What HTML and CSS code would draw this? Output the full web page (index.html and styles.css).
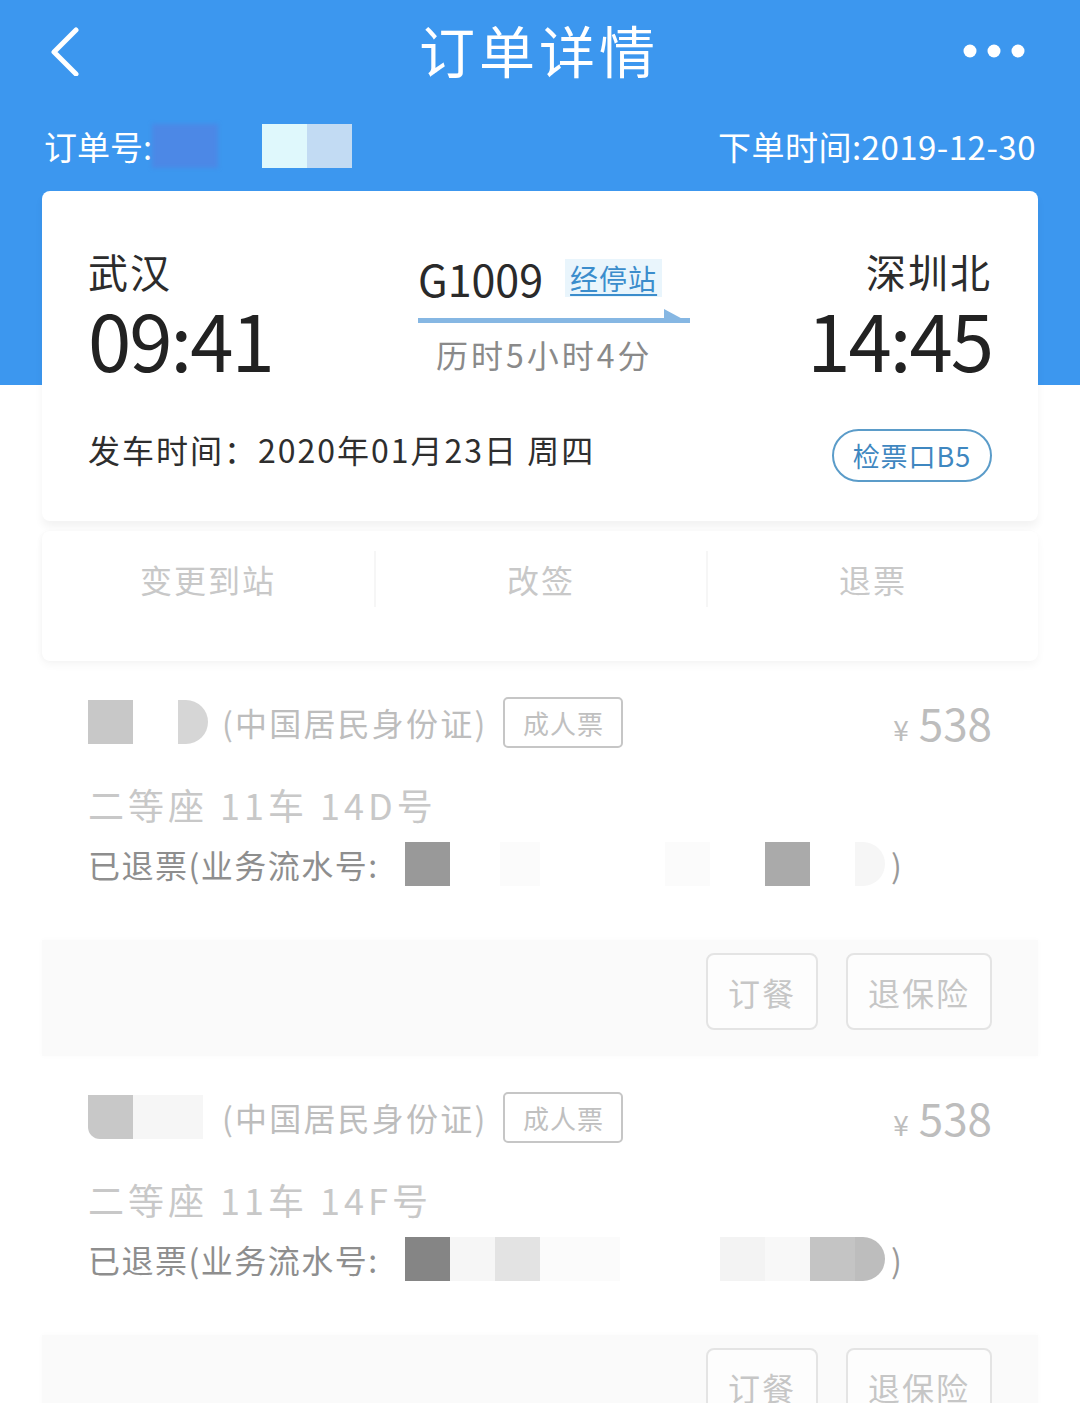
FILE: index.html
```html
<!DOCTYPE html>
<html lang="zh-CN">
<head>
<meta charset="utf-8">
<title>订单详情</title>
<link rel="stylesheet" href="styles.css">
</head>
<body>
<div class="page">
  <header class="topbar">
    <svg class="back" width="40" height="50" viewBox="0 0 40 50"><polyline points="30,4 8,26 30,48" fill="none" stroke="#fff" stroke-width="5" stroke-linecap="round" stroke-linejoin="round"/></svg>
    <h1 class="title">订单详情</h1>
    <svg class="more" width="64" height="16" viewBox="0 0 64 16"><circle cx="8" cy="8" r="6.5" fill="#fff"/><circle cx="32" cy="8" r="6.5" fill="#fff"/><circle cx="56" cy="8" r="6.5" fill="#fff"/></svg>
  </header>
  <div class="orderrow">
    <div class="orderno">订单号:<span class="mask m-blue"></span><span class="mask m-cyan"></span><span class="mask m-lblue"></span></div>
    <div class="ordertime">下单时间:2019-12-30</div>
  </div>

  <section class="card trip">
    <div class="route">
      <div class="end">
        <div class="station">武汉</div>
        <div class="time">09:41</div>
      </div>
      <div class="mid">
        <div class="trainline"><span class="trainno">G1009</span><span class="stops">经停站</span></div>
        <svg class="arrow" width="272" height="16" viewBox="0 0 272 16"><rect x="0" y="9" width="272" height="5" fill="#86b7e3"/><polygon points="246,0 272,14 246,14" fill="#86b7e3"/></svg>
        <div class="duration">历时5小时4分</div>
      </div>
      <div class="end right">
        <div class="station">深圳北</div>
        <div class="time">14:45</div>
      </div>
    </div>
    <div class="daterow">
      <div class="date">发车时间：2020年01月23日 周四</div>
      <div class="gate">检票口B5</div>
    </div>
  </section>

  <section class="card actions">
    <div class="act">变更到站</div>
    <div class="act">改签</div>
    <div class="act">退票</div>
  </section>

  <section class="passenger">
    <div class="prow">
      <div class="pname"><span class="blk b-c8"></span><span class="gap44"></span><span class="blk b-d6 round-r w30"></span></div>
      <span class="idtype">(中国居民身份证)</span>
      <span class="tag">成人票</span>
      <span class="price"><span class="yen">¥</span> 538</span>
    </div>
    <div class="seat">二等座 11车 14D号</div>
    <div class="serial">
      <span class="slabel">已退票(业务流水号:</span>
      <span class="blk b-99"></span><span class="sp w50"></span><span class="blk b-fc w40"></span><span class="sp w125"></span><span class="blk b-fc"></span><span class="sp w55"></span><span class="blk b-aa"></span><span class="sp w45"></span><span class="blk b-f6 round-r w30"></span><span class="paren">)</span>
    </div>
  </section>
  <div class="btnbar">
    <span class="btn">订餐</span>
    <span class="btn">退保险</span>
  </div>

  <section class="passenger">
    <div class="prow">
      <div class="pname"><span class="blk b-c8 round-bl"></span><span class="blk b-f6 w70"></span></div>
      <span class="idtype">(中国居民身份证)</span>
      <span class="tag">成人票</span>
      <span class="price"><span class="yen">¥</span> 538</span>
    </div>
    <div class="seat">二等座 11车 14F号</div>
    <div class="serial">
      <span class="slabel">已退票(业务流水号:</span>
      <span class="blk b-85"></span><span class="blk b-f7"></span><span class="blk b-e3"></span><span class="blk b-fc w80"></span><span class="sp w100"></span><span class="blk b-f3"></span><span class="blk b-f9"></span><span class="blk b-c4"></span><span class="blk b-bd round-r w30"></span><span class="paren">)</span>
    </div>
  </section>
  <div class="btnbar">
    <span class="btn">订餐</span>
    <span class="btn">退保险</span>
  </div>
</div>
</body>
</html>
```
FILE: styles.css
```css
* { box-sizing: border-box; margin: 0; padding: 0; }
html, body { width: 1080px; height: 1403px; overflow: hidden; }
body {
  font-family: "Noto Sans CJK SC", "Noto Sans", sans-serif;
  background: #ffffff;
  color: #333;
}
.page {
  height: 1403px;
  background: linear-gradient(to bottom, #3c97ef 0, #3c97ef 385px, #ffffff 385px);
  display: flex;
  flex-direction: column;
}
.page > * { flex-shrink: 0; }
.topbar {
  height: 106px;
  display: flex;
  align-items: center;
  justify-content: space-between;
  padding: 0 54px 8px 46px;
}
.back { display: block; margin-top: 4px; }
.title {
  font-size: 56px;
  font-weight: 400;
  color: #fff;
  letter-spacing: 4px;
  line-height: 1;
  margin-left: 30px;
}
.more { display: block; margin-top: 4px; }

.orderrow {
  height: 85px;
  display: flex;
  align-items: center;
  justify-content: space-between;
  padding: 0 44px 6px 44px;
  color: #fff;
  font-size: 33px;
}
.orderno { display: flex; align-items: center; }
.mask { display: inline-block; height: 44px; }
.m-blue { width: 66px; background: #4c88e6; margin-right: 44px; filter: blur(2px); }
.m-cyan { width: 45px; background: #dff8fc; }
.m-lblue { width: 45px; background: #c2dbf3; }
.ordertime { letter-spacing: 0.5px; }

.card {
  margin: 0 42px;
  background: #fff;
  border-radius: 8px;
}
.trip {
  height: 330px;
  padding: 56px 46px 0 46px;
  box-shadow: 0 6px 8px rgba(0,0,0,0.05);
}
.route {
  display: grid;
  grid-template-columns: 330px 272px 1fr;
}
.end { display: flex; flex-direction: column; }
.end.right { align-items: flex-end; }
.station {
  font-size: 40px;
  line-height: 48px;
  color: #2c2c2c;
  letter-spacing: 2px;
}
.time {
  font-size: 78px;
  line-height: 78px;
  color: #222;
  letter-spacing: -2px;
  margin-top: 4px;
}
.mid { display: flex; flex-direction: column; padding-top: 7px; }
.trainline { display: flex; align-items: center; height: 48px; }
.trainno { font-size: 43px; color: #2a2a2a; line-height: 48px; }
.stops {
  margin-left: 22px;
  font-size: 28px;
  color: #3b8dcc;
  text-decoration: underline;
  text-underline-offset: 4px;
  background: #e9f5fc;
  padding: 0 5px;
  line-height: 38px;
  letter-spacing: 1px;
}
.arrow { display: block; margin-top: 7px; }
.duration {
  font-size: 32px;
  color: #8a8a8a;
  letter-spacing: 3px;
  line-height: 44px;
  margin-top: 7px;
  padding-left: 18px;
}
.daterow {
  display: flex;
  align-items: center;
  justify-content: space-between;
  margin-top: 38px;
}
.date { font-size: 32px; color: #2e2e2e; letter-spacing: 2px; }
.gate {
  width: 160px;
  height: 53px;
  margin-top: 14px;
  border: 2px solid #5b9cc9;
  border-radius: 27px;
  color: #3f87c0;
  font-size: 27px;
  display: flex;
  align-items: center;
  justify-content: center;
  letter-spacing: 1px;
}

.actions {
  margin-top: 10px;
  height: 130px;
  display: grid;
  grid-template-columns: 1fr 1fr 1fr;
  box-shadow: 0 4px 8px rgba(0,0,0,0.04), -2px 0 4px rgba(0,0,0,0.02);
  padding-bottom: 34px;
}
.act {
  display: flex;
  align-items: center;
  justify-content: center;
  font-size: 32px;
  color: #c8c8c8;
  letter-spacing: 2px;
}
.act + .act { border-left: 2px solid #f6f6f6; margin: 20px 0; }
.act:first-child { margin: 20px 0; }

.passenger {
  margin: 0 42px;
  height: 279px;
  padding: 33px 46px 0 46px;
  display: flex;
  flex-direction: column;
}
.prow {
  display: flex;
  align-items: center;
  height: 56px;
}
.pname { display: flex; align-items: center; width: 134px; flex: none; }
.blk { display: inline-block; width: 45px; height: 44px; flex: none; }
.sp { display: inline-block; height: 44px; flex: none; }
.gap44 { display: inline-block; width: 45px; }
.w30 { width: 30px; }
.w40 { width: 40px; }
.w45 { width: 45px; }
.w50 { width: 50px; }
.w55 { width: 55px; }
.w70 { width: 70px; }
.w80 { width: 80px; }
.w100 { width: 100px; }
.w125 { width: 125px; }
.round-r { border-radius: 0 22px 22px 0; }
.round-bl { border-radius: 0 0 0 12px; }
.b-c8 { background: #c8c8c8; }
.b-d6 { background: #d6d6d6; }
.b-99 { background: #999999; }
.b-aa { background: #aaaaaa; }
.b-fc { background: #fbfbfb; }
.b-f6 { background: #f6f6f6; }
.b-85 { background: #858585; }
.b-f7 { background: #f6f6f6; }
.b-e3 { background: #e3e3e3; }
.b-f3 { background: #f3f3f3; }
.b-f9 { background: #f8f8f8; }
.b-c4 { background: #c4c4c4; }
.b-bd { background: #bdbdbd; }
.idtype {
  font-size: 32px;
  color: #bdbdbd;
  letter-spacing: 2.2px;
}
.tag {
  margin-left: 16px;
  width: 120px;
  height: 51px;
  border: 2px solid #c6c6c6;
  border-radius: 5px;
  font-size: 26px;
  color: #c0c0c0;
  display: flex;
  align-items: center;
  justify-content: center;
  letter-spacing: 1px;
}
.price {
  margin-left: auto;
  font-size: 44px;
  color: #bdbdbd;
  line-height: 1;
}
.yen { font-size: 28px; }
.seat {
  margin-top: 32px;
  font-size: 36px;
  color: #c8c8c8;
  letter-spacing: 4px;
  line-height: 44px;
}
.serial {
  margin-top: 16px;
  display: flex;
  align-items: center;
  height: 44px;
}
.slabel {
  width: 317px;
  flex: none;
  font-size: 32px;
  color: #8e8e8e;
  letter-spacing: 1.5px;
}
.paren { font-size: 32px; color: #999; margin-left: 6px; }

.btnbar {
  margin: 0 42px;
  height: 116px;
  background: #fafafa;
  display: flex;
  justify-content: flex-end;
  align-items: flex-start;
  gap: 28px;
  padding: 13px 46px 0 0;
  box-shadow: 0 0 6px rgba(0,0,0,0.025);
}
.btn {
  height: 77px;
  padding: 0 20px;
  border: 2px solid #e4e4e4;
  border-radius: 8px;
  background: #fdfdfd;
  font-size: 32px;
  color: #c6c6c6;
  display: flex;
  align-items: center;
  letter-spacing: 2px;
}
```
